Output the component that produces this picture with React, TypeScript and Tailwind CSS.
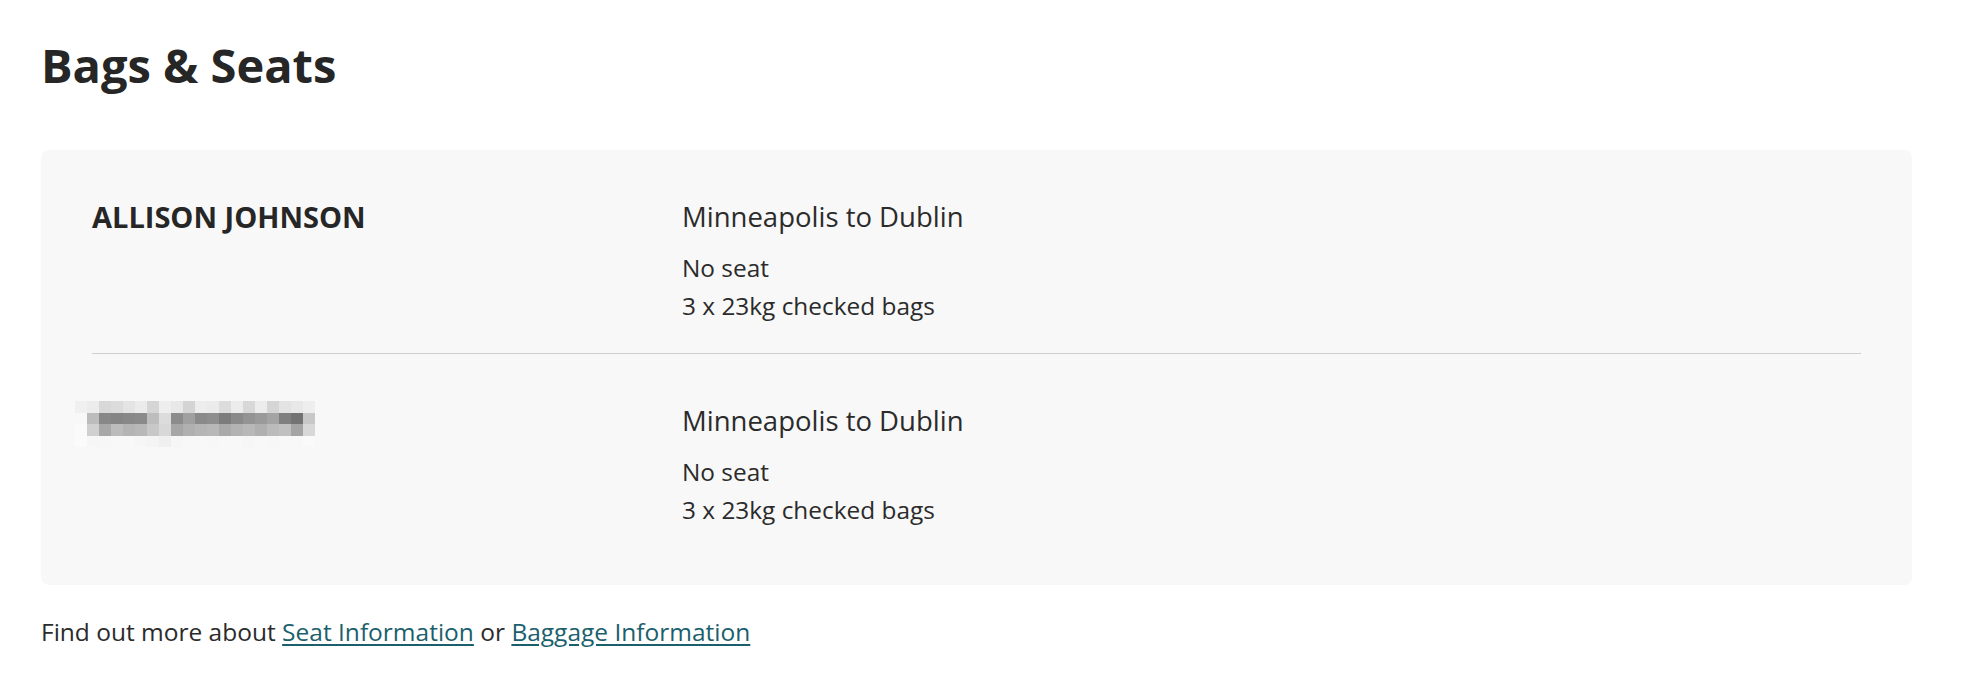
const MOSAIC: string[][] = [
  ["#f0f0f0", "#ececec", "#d8d8d8", "#dcdcdc", "#e4e4e4", "#ebebeb", "#d5d5d5", "#eeeeee", "#e8e8e8", "#d4d4d4", "#ededed", "#ebebeb", "#dcdcdc", "#ececec", "#d8d8d8", "#ececec", "#d5d5d5", "#e3e3e3", "#e8e8e8", "#eeeeee"],
  ["#f8f8f8", "#bcbcbc", "#888888", "#858585", "#888888", "#8a8a8a", "#bdbdbd", "#dcdcdc", "#8c8c8c", "#a0a0a0", "#8a8a8a", "#8e8e8e", "#7c7c7c", "#8a8a8a", "#939393", "#9a9a9a", "#a4a4a4", "#7f7f7f", "#737373", "#c8c8c8"],
  ["#fafafa", "#d0d0d0", "#a8a8a8", "#bcbcbc", "#b4b4b4", "#b8b8b8", "#c8c8c8", "#d8d8d8", "#a6a6a6", "#b0b0b0", "#b5b5b5", "#b8b8b8", "#aaaaaa", "#b3b3b3", "#b8b8b8", "#b0b0b0", "#bbbbbb", "#c0c0c0", "#a4a4a4", "#d8d8d8"],
  ["#fbfbfb", "#f6f6f6", "#f7f7f7", "#f8f8f8", "#f8f8f8", "#f6f6f6", "#f4f4f4", "#efefef", "#f6f6f6", "#f8f8f8", "#f8f8f8", "#f7f7f7", "#f8f8f8", "#f8f8f8", "#f6f6f6", "#f8f8f8", "#f7f7f7", "#f8f8f8", "#f8f8f8", "#fafafa"],
];

const PASSENGERS = [
  { name: "ALLISON JOHNSON", hidden: false },
  { name: "", hidden: true },
];

function BlurredName() {
  return (
    <div className="-ml-[17px] -mt-[2px] grid grid-cols-[repeat(20,12px)] grid-rows-[repeat(4,11.5px)]">
      {MOSAIC.flatMap((row, r) =>
        row.map((c, i) => <div key={`${r}-${i}`} style={{ backgroundColor: c }} />)
      )}
    </div>
  );
}

function PassengerRow({ name, hidden, last }: { name: string; hidden: boolean; last: boolean }) {
  return (
    <div className={`grid grid-cols-[590px_1fr] pt-[49px] ${last ? "pb-[56px]" : "pb-[28px] border-b border-[#cfcfcf]"}`}>
      <div>
        {hidden ? (
          <BlurredName />
        ) : (
          <div className="text-[29px] leading-[36px] font-bold text-[#262626]">{name}</div>
        )}
      </div>
      <div className="text-[#2b2b2b]">
        <div className="text-[27.5px] leading-[36px] font-medium">Minneapolis to Dublin</div>
        <div className="mt-[14px] text-[24.4px] leading-[38px]">No seat</div>
        <div className="text-[24.4px] leading-[38px]">3 x 23kg checked bags</div>
      </div>
    </div>
  );
}

export default function App() {
  return (
    <div className="min-h-[680px] bg-white pl-[41px] pr-[54px] pt-[36px] font-['Open_Sans',sans-serif] text-[#2b2b2b]">
      <h1 className="text-[47px] leading-[58px] font-bold text-[#262626]">Bags &amp; Seats</h1>

      <div className="mt-[56px] rounded-lg bg-[#f8f8f8] px-[51px]">
        {PASSENGERS.map((p, i) => (
          <PassengerRow key={i} name={p.name} hidden={p.hidden} last={i === PASSENGERS.length - 1} />
        ))}
      </div>

      <p className="mt-[29px] text-[24.5px] leading-[36px]">
        Find out more about{" "}
        <a href="#" className="text-[#1b5f6d] underline underline-offset-[3px]">Seat Information</a>{" "}
        or{" "}
        <a href="#" className="text-[#1b5f6d] underline underline-offset-[3px]">Baggage Information</a>
      </p>
    </div>
  );
}
